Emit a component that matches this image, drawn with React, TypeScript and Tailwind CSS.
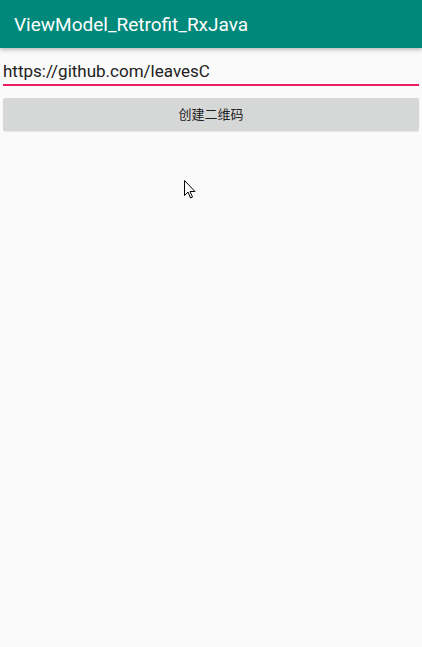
import React from 'react';

const font = { fontFamily: 'Roboto, "Noto Sans CJK SC", sans-serif' };

export default function App() {
  return (
    <div className="relative w-[422px] h-[647px] bg-[#fafafa] overflow-hidden" style={font}>
      {/* App bar */}
      <div className="h-[48px] bg-[#00887a] flex items-center px-[14px] pt-[1px] shadow-[0_2px_4px_rgba(0,0,0,0.25)] relative z-10">
        <span className="text-white text-[19px] leading-none">ViewModel_Retrofit_RxJava</span>
      </div>

      {/* Input */}
      <div className="px-[3px] pt-[10px]">
        <div className="h-[28px] flex items-center pt-[1px] border-b-2 border-[#e91e63]">
          <span className="text-[17px] text-[#212121] leading-none">https://github.com/leavesC</span>
        </div>
      </div>

      {/* Button */}
      <div className="px-[3px] pt-[12px]">
        <div className="h-[33px] bg-[#d6d7d7] rounded-[2px] flex items-center justify-center shadow-[0_1px_1px_rgba(0,0,0,0.08)]">
          <span className="text-[13px] text-[#222]">创建二维码</span>
        </div>
      </div>

      {/* Mouse cursor */}
      <svg className="absolute left-[184px] top-[180px]" width="13" height="20" viewBox="0 0 13 20">
        <path d="M0.5 0.5 L0.5 15.5 L4 12 L6.5 18 L8.5 17 L6 11.5 L11 11.5 Z" fill="#fff" stroke="#000" strokeWidth="1" strokeLinejoin="miter" />
      </svg>
    </div>
  );
}
